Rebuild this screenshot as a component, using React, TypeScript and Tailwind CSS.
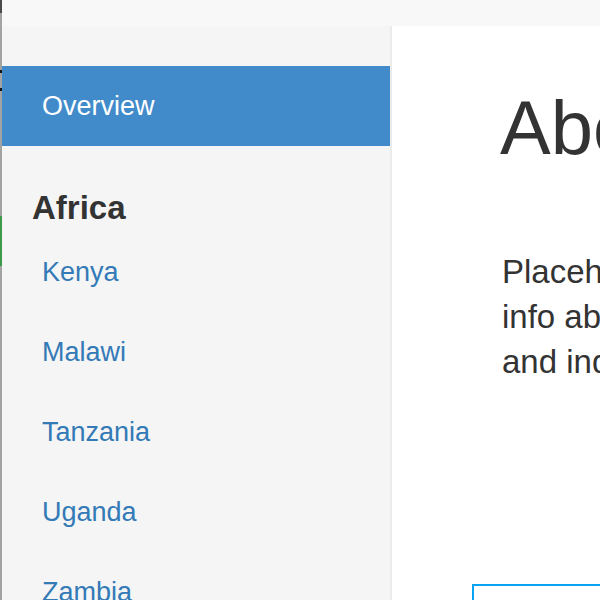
import React from 'react';

const paises = ['Kenya', 'Malawi', 'Tanzania', 'Uganda', 'Zambia'];

export default function App() {
  return (
    <div className="flex h-[600px] w-[600px] overflow-hidden bg-white font-['Liberation_Sans',Arial,sans-serif] text-[#333]">
      {/* fatia de outra janela na borda esquerda */}
      <div className="flex w-[2px] shrink-0 flex-col bg-[#a3a3a3]">
        <div className="h-[13px] bg-[#4a4a4a]" />
        <div className="mt-[57px] h-[3px] bg-[#111]" />
        <div className="mt-[15px] h-[3px] bg-[#111]" />
        <div className="mt-[125px] h-[50px] bg-[#3d9a4a]" />
      </div>

      <div className="flex min-w-0 flex-1 flex-col">
        <div className="h-[26px] shrink-0 bg-[#f8f8f8]" />

        <div className="flex min-h-0 flex-1">
          <nav className="w-[390px] shrink-0 border-r-2 border-[#ebebeb] bg-[#f5f5f5] pt-10">
            <div className="flex h-20 items-center bg-[#428bca] pl-10 text-[27px] text-white">Overview</div>
            <h2 className="mt-[44px] pl-[30px] text-[33px] font-bold leading-9">Africa</h2>
            <ul className="mt-[6px]">
              {paises.map((p) => (
                <li key={p} className="flex h-20 items-center pl-10 text-[27px] text-[#337ab7]">
                  {p}
                </li>
              ))}
            </ul>
          </nav>

          <main className="min-w-0 flex-1 overflow-hidden">
            <h1 className="ml-[108px] mt-16 whitespace-nowrap text-[76px] font-medium leading-none">About</h1>
            <p className="ml-[110px] mt-[83px] whitespace-nowrap text-[33px] leading-[45px]">
              Placeholder text for the
              <br />
              info about this project
              <br />
              and indicators shown.
            </p>
            <div className="ml-20 mt-[200px] h-16 w-[400px] border-2 border-[#08a4f4]" />
          </main>
        </div>
      </div>
    </div>
  );
}
